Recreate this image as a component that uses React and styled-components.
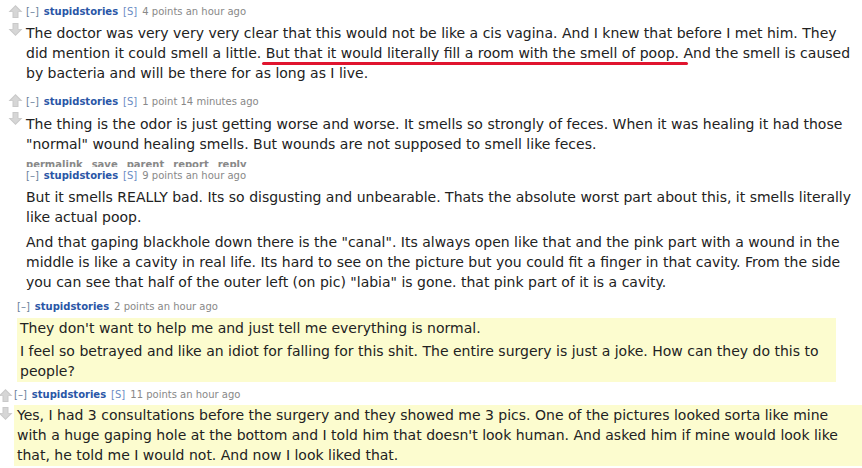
import React from "react";
import styled, { createGlobalStyle } from "styled-components";

const Global = createGlobalStyle`
  html, body { margin: 0; padding: 0; background: #fff; }
  body { font-family: "DejaVu Sans", Verdana, sans-serif; color: #222; }
`;

const Page = styled.div`
  width: 862px;
  height: 468px;
  overflow: hidden;
  background: #fff;
`;

const Comment = styled.div`
  display: flex;
  height: ${(p) => p.$height}px;
  padding-left: ${(p) => p.$left}px;
  overflow: hidden;
`;

const ArrowCol = styled.div`
  width: ${(p) => p.$width || 22}px;
  flex: none;
  display: flex;
  flex-direction: column;
  align-items: center;
  gap: 3px;
  padding-top: ${(p) => p.$pad || 3}px;
  margin-left: ${(p) => p.$shift || 0}px;
`;

const Entry = styled.div`
  flex: 1;
  min-width: 0;
  margin-top: ${(p) => p.$shift || 0}px;
`;

const Tagline = styled.div`
  font-size: 10px;
  line-height: 14px;
  color: #888;
  white-space: nowrap;
  margin-bottom: ${(p) => p.$gap ?? 4}px;
`;

const Expand = styled.span`
  color: #6a7f9c;
  margin-right: 5px;
`;

const Author = styled.span`
  color: #2a56a6;
  font-weight: bold;
  margin-right: 5px;
`;

const Submitter = styled.span`
  color: #6b8cc4;
  margin-right: 5px;
`;

const Body = styled.div`
  font-size: 14px;
  line-height: 20px;
  color: #222;
  background: ${(p) => (p.$highlight ? "#fcfccf" : "transparent")};
  width: ${(p) => p.$width || "auto"};
  padding: ${(p) => (p.$highlight ? "0 6px 1px 3px" : "0")};
  box-sizing: border-box;
`;

const Para = styled.p`
  margin: 0 0 ${(p) => p.$after ?? 5}px 0;
`;

// hand-drawn red marker under a sentence
const Marked = styled.span`
  position: relative;

  &::after {
    content: "";
    position: absolute;
    left: -4px;
    right: -9px;
    bottom: -4px;
    height: 3px;
    border-radius: 2px;
    background: #e0142e;
  }
`;

const Buttons = styled.ul`
  list-style: none;
  margin: 0;
  padding: 4px 0 0 0;
  display: flex;
  gap: 9px;
  font-size: 10px;
  font-weight: bold;
  color: #888;
  line-height: 14px;
`;

const Arrow = ({ down }) => (
  <svg width="15" height="15" viewBox="0 0 15 15" style={{ transform: down ? "rotate(180deg)" : "none" }}>
    <path d="M7.5 1 L14.5 8 L10.5 8 L10.5 14 L4.5 14 L4.5 8 L0.5 8 Z" fill="#c9c9c9" />
    <path d="M7.5 2.5 L12.5 7.5 L9.5 7.5 L9.5 13 L5.5 13 L5.5 7.5 L2.5 7.5 Z" fill="#d6d6d6" />
  </svg>
);

const Votes = (props) => (
  <ArrowCol {...props}>
    <Arrow />
    <Arrow down />
  </ArrowCol>
);

const Tag = ({ points, time, op = true, gap }) => (
  <Tagline $gap={gap}>
    <Expand>[–]</Expand>
    <Author>stupidstories</Author>
    {op && <Submitter>[S]</Submitter>}
    {points} {time}
  </Tagline>
);

export default function App() {
  return (
    <Page>
      <Global />
      <Comment $height={90} $left={4}>
        <Votes $pad={4} />
        <Entry $shift={5}>
          <Tag points="4 points" time="an hour ago" />
          <Body>
            <Para>
              The doctor was very very very clear that this would not be like a cis vagina. And I knew that before I met him. They did mention it could smell a little.{" "}
              <Marked>But that it would literally fill a room with the smell of poop.</Marked> And the smell is caused by bacteria and will be there for as long as I live.
            </Para>
          </Body>
        </Entry>
      </Comment>

      <Comment $height={77} $left={4}>
        <Votes $pad={3} />
        <Entry $shift={5}>
          <Tag points="1 point" time="14 minutes ago" gap={5} />
          <Body>
            <Para $after={0}>
              The thing is the odor is just getting worse and worse. It smells so strongly of feces. When it was healing it had those "normal" wound healing smells. But wounds are not supposed to smell like feces.
            </Para>
          </Body>
          <Buttons>
            <li>permalink</li>
            <li>save</li>
            <li>parent</li>
            <li>report</li>
            <li>reply</li>
          </Buttons>
        </Entry>
      </Comment>

      <Comment $height={126} $left={26}>
        <Entry $shift={2}>
          <Tag points="9 points" time="an hour ago" gap={4} />
          <Body>
            <Para>
              But it smells REALLY bad. Its so disgusting and unbearable. Thats the absolute worst part about this, it smells literally like actual poop.
            </Para>
            <Para>
              And that gaping blackhole down there is the "canal". Its always open like that and the pink part with a wound in the middle is like a cavity in real life. Its hard to see on the picture but you could fit a finger in that cavity. From the side you can see that half of the outer left (on pic) "labia" is gone. that pink part of it is a cavity.
            </Para>
          </Body>
        </Entry>
      </Comment>

      <Comment $height={91} $left={17}>
        <Entry $shift={7}>
          <Tag points="2 points" time="an hour ago" op={false} gap={4} />
          <Body $highlight $width="819px">
            <Para $after={3}>They don't want to help me and just tell me everything is normal.</Para>
            <Para $after={0}>
              I feel so betrayed and like an idiot for falling for this shit. The entire surgery is just a joke. How can they do this to people?
            </Para>
          </Body>
        </Entry>
      </Comment>

      <Comment $height={84} $left={0}>
        <Votes $width={17} $pad={4} $shift={-3} />
        <Entry $shift={4}>
          <Tag points="11 points" time="an hour ago" gap={3} />
          <Body $highlight>
            <Para $after={0}>
              Yes, I had 3 consultations before the surgery and they showed me 3 pics. One of the pictures looked sorta like mine with a huge gaping hole at the bottom and I told him that doesn't look human. And asked him if mine would look like that, he told me I would not. And now I look liked that.
            </Para>
          </Body>
        </Entry>
      </Comment>
    </Page>
  );
}
